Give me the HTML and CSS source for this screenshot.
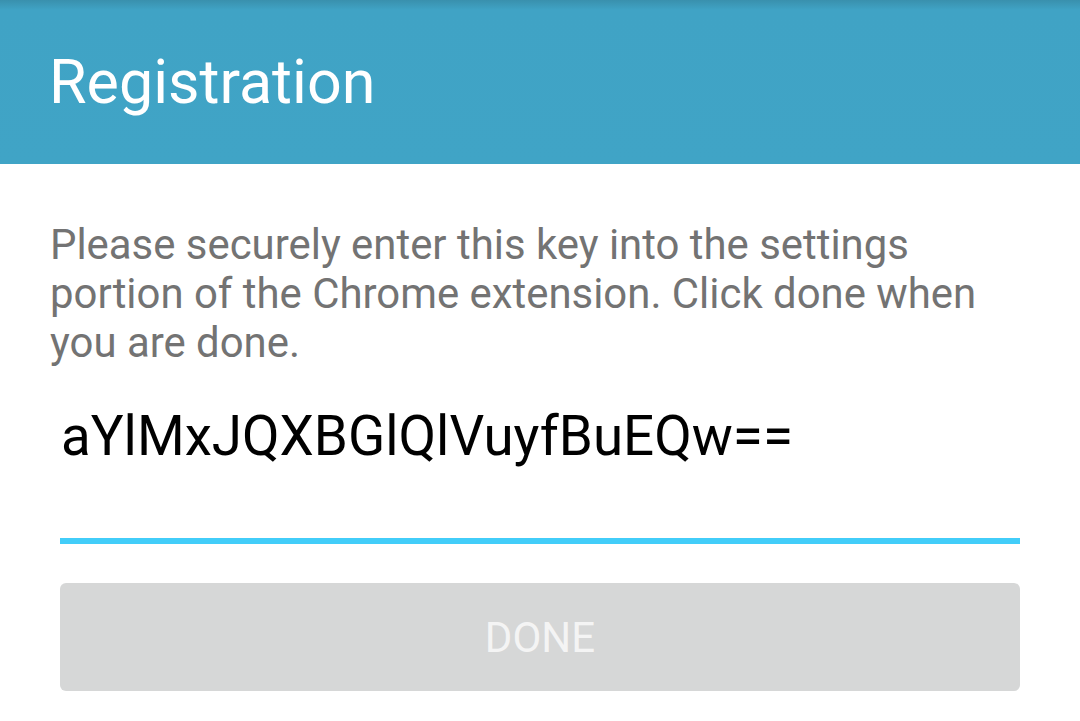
FILE: index.html
```html
<!DOCTYPE html>
<html>
<head>
<meta charset="utf-8">
<link rel="stylesheet" href="styles.css">
</head>
<body>
<header class="appbar"><h1 class="title">Registration</h1></header>
<main class="content">
  <p class="instructions">Please securely enter this key into the settings portion of the Chrome extension. Click done when you are done.</p>
  <div class="field">
    <div class="key">aYlMxJQXBGlQlVuyfBuEQw==</div>
    <div class="underline"></div>
  </div>
  <button class="done" type="button">DONE</button>
</main>
</body>
</html>
```
FILE: styles.css
```css
html, body {
  margin: 0;
  padding: 0;
  background: #ffffff;
  font-family: Roboto, "Noto Sans", sans-serif;
}
.appbar {
  height: 164px;
  background: linear-gradient(to bottom, #3990ad 0px, #40a3c5 10px, #40a4c6 100%);
  display: flex;
  align-items: center;
  padding-left: 49px;
  box-sizing: border-box;
}
.title {
  margin: 0;
  font-weight: 400;
  font-size: 61px;
  color: #ffffff;
  line-height: 1;
}
.content {
  padding: 56px 60px 0 60px;
  display: flex;
  flex-direction: column;
}
.instructions {
  margin: 0 0 0 -10px;
  font-size: 41.9px;
  line-height: 49px;
  color: #737373;
}
.field {
  margin-top: 38px;
  display: flex;
  flex-direction: column;
}
.key {
  padding-left: 1px;
  font-size: 54.7px;
  line-height: 63px;
  color: #000000;
}
.underline {
  margin-top: 70px;
  height: 6px;
  background: #42cdf9;
}
.done {
  margin-top: 39px;
  height: 108px;
  border: none;
  border-radius: 6px;
  background: #d6d7d7;
  color: #f4f4f4;
  font-family: Roboto, "Noto Sans", sans-serif;
  font-size: 42px;
  padding: 0;
}
```
